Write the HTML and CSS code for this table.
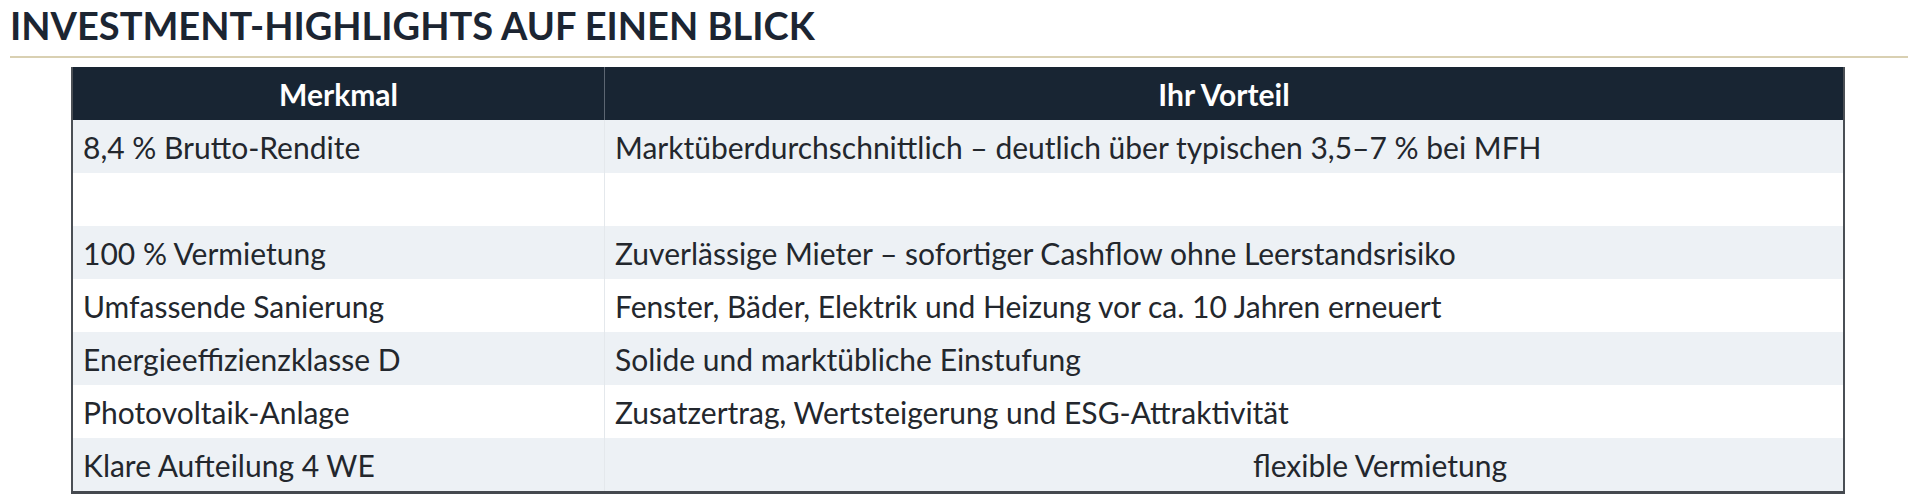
FILE: index.html
```html
<!DOCTYPE html>
<html lang="de">
<head>
<meta charset="utf-8">
<title>Investment-Highlights</title>
<link rel="stylesheet" href="styles.css">
</head>
<body>
<div class="page">
  <h1 class="title">INVESTMENT-HIGHLIGHTS AUF EINEN BLICK</h1>
  <div class="rule"></div>
  <table class="highlights">
    <thead>
      <tr><th class="col-a">Merkmal</th><th class="col-b">Ihr Vorteil</th></tr>
    </thead>
    <tbody>
      <tr class="shade"><td>8,4 % Brutto-Rendite</td><td>Marktüberdurchschnittlich – deutlich über typischen 3,5–7 % bei MFH</td></tr>
      <tr><td></td><td></td></tr>
      <tr class="shade"><td>100 % Vermietung</td><td>Zuverlässige Mieter – sofortiger Cashflow ohne Leerstandsrisiko</td></tr>
      <tr><td>Umfassende Sanierung</td><td>Fenster, Bäder, Elektrik und Heizung vor ca. 10 Jahren erneuert</td></tr>
      <tr class="shade"><td>Energieeffizienzklasse D</td><td>Solide und marktübliche Einstufung</td></tr>
      <tr><td>Photovoltaik-Anlage</td><td>Zusatzertrag, Wertsteigerung und ESG-Attraktivität</td></tr>
      <tr class="shade last"><td>Klare Aufteilung 4 WE</td><td class="offset">flexible Vermietung</td></tr>
    </tbody>
  </table>
</div>
</body>
</html>
```
FILE: styles.css
```css
html, body {
  margin: 0;
  padding: 0;
  background: #ffffff;
}
body {
  font-family: Lato, "Open Sans", "Liberation Sans", sans-serif;
  color: #23272d;
}
.page {
  padding: 0 12px 0 10px;
}
.title {
  margin: 0;
  padding-top: 4px;
  height: 52px;
  font-size: 38px;
  line-height: 42px;
  font-weight: 700;
  color: #1c2532;
  letter-spacing: 0;
}
.rule {
  height: 2px;
  background: #d9d0b2;
}
.highlights {
  margin: 9px 0 0 61px;
  width: 1774px;
  border-collapse: collapse;
  table-layout: fixed;
  border-left: 2px solid #4a4f55;
  border-right: 2px solid #4a4f55;
  border-bottom: 3px solid #45494f;
}
.col-a { width: 511px; }
.highlights th {
  background: #182533;
  color: #ffffff;
  font-weight: 700;
  font-size: 30px;
  height: 53px;
  padding: 0 10px;
  text-align: center;
  border-left: 1px solid #5c6672;
}
.highlights th:first-child { border-left: none; }
.highlights td {
  height: 53px;
  padding: 0 10px;
  font-size: 30px;
  line-height: 34px;
  color: #23272d;
  background: #ffffff;
  border-left: 1px solid #e4e8ec;
  vertical-align: middle;
}
.highlights td:first-child { border-left: none; }
.highlights tr.shade td { background: #edf1f5; }
.highlights td.offset { padding-left: 648px; }
```
